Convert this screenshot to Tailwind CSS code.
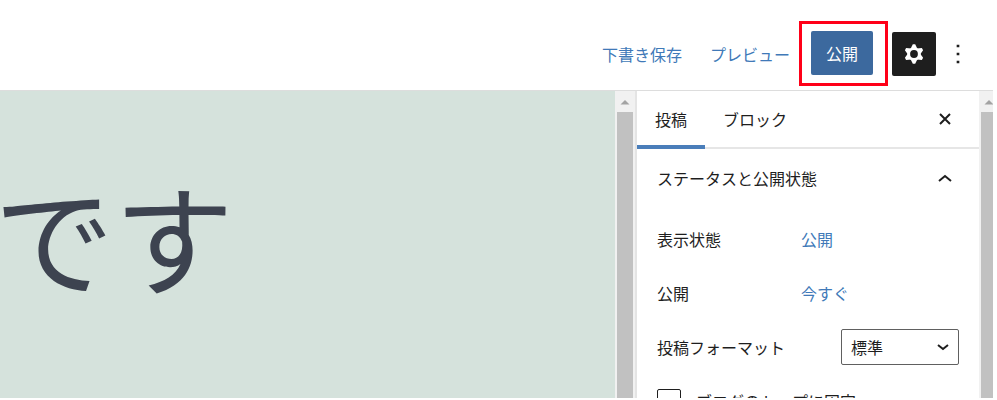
<!DOCTYPE html>
<html lang="ja">
<head>
<meta charset="utf-8">
<meta name="viewport" content="width=device-width, initial-scale=1">
<title>投稿の編集</title>
<script src="https://cdn.jsdelivr.net/npm/@tailwindcss/browser@4"></script>
</head>
<body class="flex h-screen flex-col overflow-hidden bg-white pr-1 pb-0.5 font-['Noto_Sans_CJK_JP',sans-serif] text-base leading-6 text-[#1e1e1e]">
  <header class="flex shrink-0 items-center justify-end border-b border-[#dddddd] pt-[21px] pr-[21px] pb-1">
    <button type="button" class="text-[#4079b8]">下書き保存</button>
    <button type="button" class="ml-7 text-[#4079b8]">プレビュー</button>
    <div class="ml-[9px] border-3 border-[#ff0018] pt-[7px] pr-3 pb-2 pl-[9px]">
      <button type="button" class="block h-11 rounded-xs bg-[#3c699e] px-[15px] text-white">公開</button>
    </div>
    <button type="button" aria-label="設定" class="ml-1 flex size-11 items-center justify-center rounded-xs bg-[#1e1e1e] text-white">
      <svg class="size-6" viewBox="0 0 24 24" aria-hidden="true"><g fill="currentColor"><circle cx="12" cy="12" r="6.600"/><path d="M8.500 7 10.800 2.200h2.400L15.500 7z"/><path d="M8.500 7 10.800 2.200h2.400L15.500 7z" transform="rotate(60 12 12)"/><path d="M8.500 7 10.800 2.200h2.400L15.500 7z" transform="rotate(120 12 12)"/><path d="M8.500 7 10.800 2.200h2.400L15.500 7z" transform="rotate(180 12 12)"/><path d="M8.500 7 10.800 2.200h2.400L15.500 7z" transform="rotate(240 12 12)"/><path d="M8.500 7 10.800 2.200h2.400L15.500 7z" transform="rotate(300 12 12)"/></g><circle cx="12" cy="12" r="3.900" fill="#1e1e1e"/></svg>
    </button>
    <button type="button" aria-label="オプション" class="ml-2 flex h-11 w-7 items-center justify-center">
      <svg class="size-8 shrink-0" viewBox="0 0 24 24" fill="currentColor" aria-hidden="true"><path d="M13 19h-2v-2h2v2zm0-6h-2v-2h2v2zm0-6h-2V5h2v2z"/></svg>
    </button>
  </header>

  <div class="flex min-h-0 flex-1">
    <main class="min-w-0 flex-1 overflow-hidden bg-[#d5e2dc] pt-14">
      <h1 class="-ml-1.5 text-[120px] leading-[176px] whitespace-nowrap text-[#3d4350]">です</h1>
    </main>
    <div class="flex w-5 shrink-0 flex-col items-center bg-[#f1f1f1]" aria-hidden="true">
      <svg class="h-[21px] w-4 shrink-0" viewBox="0 0 16 21"><path d="M3.500 13.500 8 9l4.500 4.500z" fill="#a3a3a3"/></svg>
      <div class="w-4 flex-1 bg-[#c1c1c1]"></div>
    </div>

    <aside class="w-[344px] shrink-0 overflow-hidden border-l-2 border-[#e4e4e4]">
      <div class="flex items-stretch border-b-2 border-[#e6e6e6]">
        <button type="button" class="-mb-0.5 border-b-4 border-[#4a7eba] px-[18px] pt-4 pb-3.5">投稿</button>
        <button type="button" class="px-[18px] pt-4 pb-4">ブロック</button>
        <button type="button" aria-label="設定を閉じる" class="mr-[18px] ml-auto flex w-8 items-center justify-center">
          <svg class="size-8 shrink-0" viewBox="0 0 32 32" fill="none" stroke="currentColor" stroke-width="2" aria-hidden="true"><path d="m11 11 10 10M21 11 11 21"/></svg>
        </button>
      </div>
      <section class="px-5">
        <h2>
          <button type="button" aria-expanded="true" class="flex w-full items-center justify-between py-[17px] text-left">
            ステータスと公開状態
            <svg class="-my-1 -mr-0.5 size-8" viewBox="0 0 32 32" fill="none" stroke="currentColor" stroke-width="2" aria-hidden="true"><path d="m10 19 6-5 6 5"/></svg>
          </button>
        </h2>
        <div class="mt-[14px] flex flex-col gap-[18px]">
          <div class="flex h-9 items-center"><span class="w-36">表示状態</span><button type="button" class="text-[#4079b8]">公開</button></div>
          <div class="flex h-9 items-center"><span class="w-36">公開</span><button type="button" class="text-[#4079b8]">今すぐ</button></div>
          <div class="flex h-9 items-center justify-between">
            <label for="format">投稿フォーマット</label>
            <div class="relative">
              <select id="format" class="block h-9 w-[118px] appearance-none rounded-xs border border-[#606060] bg-white pr-8 pl-[9px]"><option>標準</option></select>
              <svg class="pointer-events-none absolute top-0.5 right-0 size-8" viewBox="0 0 32 32" fill="none" stroke="currentColor" stroke-width="2" aria-hidden="true"><path d="m11 14 5 4 5-4"/></svg>
            </div>
          </div>
          <div class="flex h-9 items-center gap-[15px]">
            <input id="sticky" type="checkbox" class="size-6 appearance-none rounded-xs border border-[#1e1e1e] bg-white">
            <label for="sticky">ブログのトップに固定</label>
          </div>
        </div>
      </section>
    </aside>
    <div class="flex w-3.5 shrink-0 flex-col items-end overflow-hidden bg-[#f1f1f1]" aria-hidden="true">
      <svg class="h-[21px] w-3 shrink-0" viewBox="0 0 12 21"><path d="M3.500 13.500 8 9l4.500 4.500z" fill="#a3a3a3"/></svg>
      <div class="w-3 flex-1 bg-[#c1c1c1]"></div>
    </div>
  </div>
</body>
</html>
